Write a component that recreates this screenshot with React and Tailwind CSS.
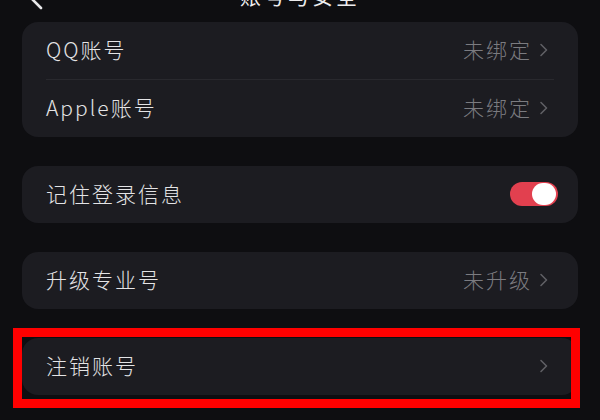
import React from "react";

const font = { fontFamily: '"Noto Sans CJK SC", "Noto Sans", sans-serif' };

function Chevron() {
  return (
    <svg width="9" height="14" viewBox="0 0 9 14" className="shrink-0">
      <path d="M2 1.5 L7.5 7 L2 12.5" fill="none" stroke="#5f5f64" strokeWidth="1.6" strokeLinecap="round" strokeLinejoin="round" />
    </svg>
  );
}

function Row({ label, value, chevron = true, right }) {
  return (
    <div className="flex h-[57px] items-center justify-between pb-[2px] pl-6 pr-[30px]">
      <span className="text-[21px] font-light tracking-[2px] text-[#e4e4e6]">{label}</span>
      {right ? (
        right
      ) : (
        <div className="flex items-center gap-[7px]">
          {value && <span className="text-[21px] font-light tracking-[2px] text-[#7b7b80]">{value}</span>}
          {chevron && <Chevron />}
        </div>
      )}
    </div>
  );
}

function Toggle() {
  return (
    <div className="-mr-[10px] flex h-[24px] w-[48px] items-center justify-end rounded-full bg-[#e2404f] px-[2px]">
      <div className="h-[22px] w-[24px] rounded-full bg-white" />
    </div>
  );
}

export default function App() {
  return (
    <div className="h-[420px] w-[600px] overflow-hidden bg-[#0e0e11]" style={font}>
      <div className="relative -mt-[24px] flex h-[40px] items-center justify-center">
        <svg className="absolute left-[26px] top-[6px]" width="18" height="28" viewBox="0 0 18 28">
          <path d="M15 2 L3 14 L15 26" fill="none" stroke="#e8e8ea" strokeWidth="2.6" strokeLinecap="round" strokeLinejoin="round" />
        </svg>
        <span className="text-[21px] tracking-[3px] text-[#ececee]">账号与安全</span>
      </div>
      <div className="mt-[6px] flex flex-col gap-[29px] px-[22px]">
        <div className="rounded-[16px] bg-[#1c1c21]">
          <Row label="QQ账号" value="未绑定" />
          <div className="mx-6 h-px bg-[#29292e]" />
          <Row label="Apple账号" value="未绑定" />
        </div>
        <div className="rounded-[16px] bg-[#1c1c21]">
          <Row label="记住登录信息" right={<Toggle />} />
        </div>
        <div className="rounded-[16px] bg-[#1c1c21]">
          <Row label="升级专业号" value="未升级" />
        </div>
        <div className="relative rounded-[16px] bg-[#1c1c21]">
          <Row label="注销账号" />
          <div className="pointer-events-none absolute -bottom-[13px] -left-[9px] -right-[2px] -top-[10px] border-[9px] border-[#ff0000]" />
        </div>
      </div>
    </div>
  );
}
